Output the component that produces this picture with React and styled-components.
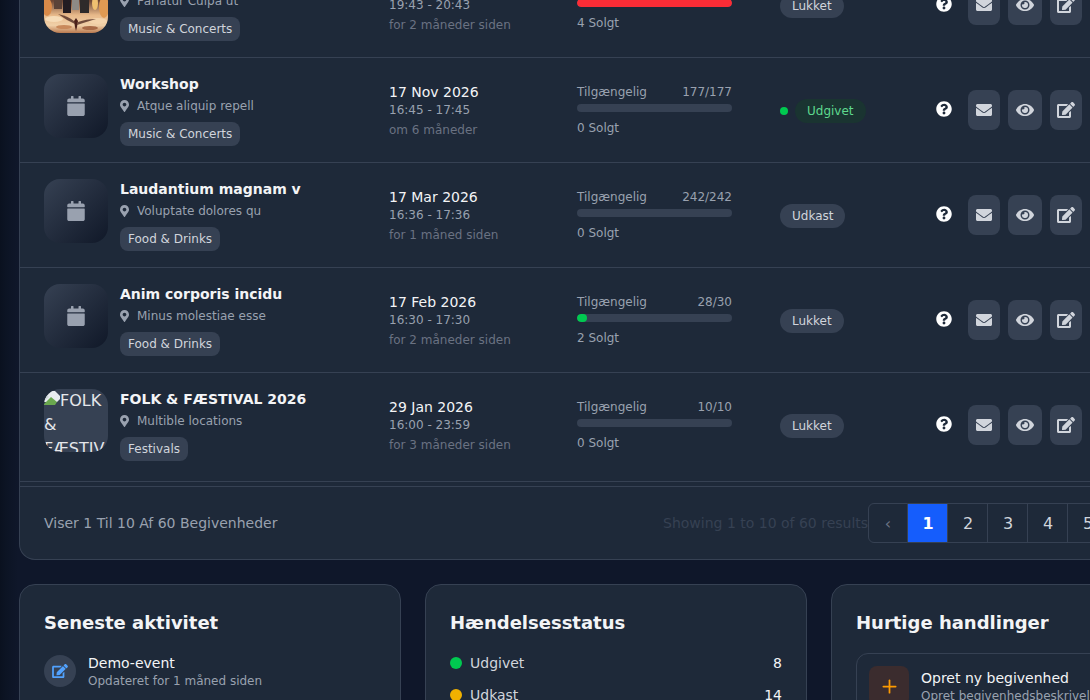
import React from "react";
import styled, { createGlobalStyle } from "styled-components";
import { FaCalendar, FaMapMarkerAlt, FaQuestionCircle, FaEnvelope, FaEye, FaEdit } from "react-icons/fa";
import { FiPlus } from "react-icons/fi";

const Global = createGlobalStyle`
  html, body { margin: 0; padding: 0; height: 700px; overflow: hidden; background: #0f172a; }
  body { font-family: "DejaVu Sans", sans-serif; }
  * { box-sizing: border-box; }
`;

const Viewport = styled.div`
  width: 1090px;
  height: 700px;
  overflow: hidden;
  background: linear-gradient(90deg, #0a111f 0, #0c1424 6px, #0f172a 18px);
`;
const Content = styled.main`
  width: 1213px;
  margin-top: -47px;
  margin-left: 19px;
  display: flex;
  flex-direction: column;
  gap: 24px;
`;
const Card = styled.section`
  background: #1e2939;
  border: 1px solid #364153;
  border-radius: 16px;
`;
const TableCard = styled(Card)`
  border-top: 0;
  border-radius: 0 0 16px 16px;
`;
const Row = styled.div`
  display: grid;
  grid-template-columns: 345px 188px 203px 156px 1fr;
  align-items: center;
  height: ${(p) => (p.$last ? 109 : 105)}px;
  padding: 16px 0 ${(p) => (p.$last ? 20 : 16)}px 24px;
  border-bottom: 1px solid #364153;
`;
const EventCell = styled.div`
  display: flex;
  gap: 12px;
`;
const Thumb = styled.div`
  width: 64px;
  height: 64px;
  border-radius: 16px;
  overflow: hidden;
  flex: none;
`;
const PlaceholderThumb = styled(Thumb)`
  display: flex;
  align-items: center;
  justify-content: center;
  background: linear-gradient(135deg, #364153 0%, #101828 100%);
  color: #99a1af;
`;
const CalendarIcon = styled(FaCalendar)`
  width: 18px;
  height: 20px;
`;
const BrokenThumb = styled(Thumb)`
  background: #364153;
  color: #e5e7eb;
  font-size: 16px;
  line-height: 24px;
  height: 63px;
  svg { vertical-align: -1px; }
`;
const EventInfo = styled.div`
  display: flex;
  flex-direction: column;
  align-items: flex-start;
`;
const EventName = styled.div`
  color: #f3f4f6;
  font-size: 14px;
  font-weight: 700;
  line-height: 20px;
`;
const Location = styled.div`
  display: flex;
  align-items: center;
  gap: 8px;
  margin-top: 3px;
  color: #99a1af;
  font-size: 12px;
  line-height: 18px;
`;
const PinIcon = styled(FaMapMarkerAlt)`
  width: 9px;
  height: 12px;
`;
const Tag = styled.span`
  margin-top: 7px;
  height: 24px;
  padding: 0 8px;
  border-radius: 8px;
  background: #364153;
  color: #d1d5dc;
  font-size: 12px;
  line-height: 24px;
`;
const DateCell = styled.div`
  display: flex;
  flex-direction: column;
`;
const DateText = styled.div`
  color: #f3f4f6;
  font-size: 14px;
  line-height: 20px;
`;
const TimeText = styled.div`
  color: #99a1af;
  font-size: 12px;
  line-height: 16px;
`;
const RelText = styled.div`
  color: #6a7282;
  font-size: 12px;
  line-height: 16px;
  margin-top: 4px;
`;
const CapacityCell = styled.div`
  width: 155px;
`;
const CapHead = styled.div`
  display: flex;
  justify-content: space-between;
  color: #99a1af;
  font-size: 12px;
  line-height: 16px;
`;
const Track = styled.div`
  height: 8px;
  margin: 4px 0 8px;
  border-radius: 4px;
  background: #364153;
  overflow: hidden;
`;
const Fill = styled.div`
  height: 100%;
  border-radius: 4px;
  background: ${(p) => p.$color};
`;
const Sold = styled.div`
  color: #99a1af;
  font-size: 12px;
  line-height: 16px;
`;
const StatusCell = styled.div`
  display: flex;
  align-items: center;
  gap: 7px;
  margin-top: 2px;
`;
const LiveDot = styled.span`
  width: 8px;
  height: 8px;
  border-radius: 50%;
  background: #00c950;
`;
const Pill = styled.span`
  height: 24px;
  padding: 0 12px;
  border-radius: 12px;
  background: ${(p) => (p.$live ? "#1a3431" : "#364153")};
  color: ${(p) => (p.$live ? "#5ed88e" : "#d1d5dc")};
  font-size: 12px;
  line-height: 24px;
`;
const Actions = styled.div`
  display: flex;
  align-items: center;
  gap: 8px;
`;
const Help = styled.span`
  display: flex;
  width: 16px;
  margin-right: 8px;
  color: #ffffff;
  font-size: 16px;
  transform: translateY(-1px);
`;
const IconBtn = styled.button`
  display: flex;
  align-items: center;
  justify-content: center;
  width: ${(p) => p.$w || 32}px;
  height: 40px;
  padding: 0;
  border: 0;
  border-radius: 8px;
  background: #364153;
  color: #d1d5dc;
  font-size: 16px;
`;
const EyeIcon = styled(FaEye)`
  width: 18px;
  height: 16px;
`;
const EditIcon = styled(FaEdit)`
  width: ${(p) => p.$w || 18}px;
  height: ${(p) => p.$h || 16}px;
`;
const Footer = styled.div`
  display: flex;
  align-items: center;
  justify-content: space-between;
  height: 73px;
  margin-top: 4px;
  padding: 0 0 0 24px;
  border-top: 1px solid #364153;
`;
const FootText = styled.div`
  color: #99a1af;
  font-size: 14px;
`;
const PagerWrap = styled.div`
  display: flex;
  align-items: center;
  margin-left: auto;
  width: 568px;
`;
const PagerNote = styled.div`
  width: 205px;
  flex: none;
  color: #364153;
  font-size: 14px;
  white-space: nowrap;
`;
const Page = styled.span`
  display: flex;
  align-items: center;
  justify-content: center;
  width: 40px;
  height: 40px;
  flex: none;
  padding-left: ${(p) => (p.$first ? 0 : 1)}px;
  border: 1px solid #364153;
  border-left-width: ${(p) => (p.$first ? 1 : 0)}px;
  border-radius: ${(p) => (p.$first ? "6px 0 0 6px" : 0)};
  background: ${(p) => (p.$active ? "#155dfc" : "transparent")};
  color: ${(p) => (p.$active ? "#ffffff" : p.$first ? "#6a7282" : "#d1d5dc")};
  font-size: 16px;
  font-weight: ${(p) => (p.$active ? 700 : 400)};
`;
const Bottom = styled.div`
  display: grid;
  grid-template-columns: repeat(3, 382px);
  gap: 24px;
  height: 300px;
`;
const Panel = styled(Card)`
  padding: 24px;
`;
const PanelTitle = styled.h3`
  margin: 0 0 16px;
  color: #f3f4f6;
  font-size: 18px;
  font-weight: 700;
  line-height: 28px;
`;
const Activity = styled.div`
  display: flex;
  align-items: center;
  gap: 12px;
`;
const ActIcon = styled.span`
  display: flex;
  align-items: center;
  justify-content: center;
  width: 32px;
  height: 32px;
  border-radius: 50%;
  background: #364153;
  color: #51a2ff;
`;
const ActTitle = styled.div`
  color: #f3f4f6;
  font-size: 14px;
  line-height: 20px;
`;
const ActSub = styled.div`
  color: #99a1af;
  font-size: 12px;
  line-height: 16px;
`;
const StatRow = styled.div`
  display: flex;
  align-items: center;
  height: 20px;
  margin-bottom: 12px;
  color: #d1d5dc;
  font-size: 14px;
`;
const StatDot = styled.span`
  width: 12px;
  height: 12px;
  margin-right: 8px;
  border-radius: 50%;
  background: ${(p) => p.$color};
`;
const StatValue = styled.span`
  margin-left: auto;
  color: #f3f4f6;
`;
const Quick = styled.div`
  display: flex;
  align-items: center;
  gap: 12px;
  padding: 12px;
  border: 1px solid #364153;
  border-radius: 12px;
`;
const QuickIcon = styled.span`
  display: flex;
  align-items: center;
  justify-content: center;
  width: 40px;
  height: 40px;
  border-radius: 8px;
  background: #3b2c2e;
  color: #fe9a00;
  font-size: 21px;
`;

function Poster() {
  return (
    <svg width="64" height="64" viewBox="0 0 64 64">
      <defs>
        <linearGradient id="sky" x1="0" y1="0" x2="0" y2="1">
          <stop offset="0" stopColor="#2c2226" />
          <stop offset=".5" stopColor="#6e4634" />
          <stop offset=".72" stopColor="#e8b98a" />
          <stop offset=".88" stopColor="#f0d0a8" />
          <stop offset="1" stopColor="#b9794f" />
        </linearGradient>
        <filter id="soft"><feGaussianBlur stdDeviation=".7" /></filter>
      </defs>
      <rect width="64" height="64" fill="url(#sky)" />
      <g filter="url(#soft)">
        <ellipse cx="3" cy="38" rx="5" ry="9" fill="#d98a4a" />
        <ellipse cx="60" cy="38" rx="5" ry="11" fill="#e09a52" />
        <rect x="10" y="28" width="8" height="12" fill="#5a4238" />
        <rect x="19" y="28" width="8" height="16" fill="#221e22" />
        <rect x="28" y="28" width="7" height="13" fill="#8d8a86" />
        <rect x="36" y="28" width="9" height="16" fill="#2f2a2a" />
        <ellipse cx="51" cy="34" rx="3" ry="7" fill="#f0c070" />
        <ellipse cx="10" cy="50" rx="9" ry="3" fill="#f6dcb8" />
        <ellipse cx="54" cy="52" rx="9" ry="3" fill="#f4d4ac" />
        <ellipse cx="20" cy="58" rx="8" ry="2" fill="#c98a5c" />
        <ellipse cx="46" cy="59" rx="8" ry="2" fill="#a86a46" />
      </g>
      <g fill="#5a362b" opacity=".85">
        <path d="M14 45 Q24 47 30 52 L31 55 Q22 51 14 45 Z" />
        <path d="M52 50 Q42 50 34 53 L33 56 Q42 53 52 50 Z" />
      </g>
      <path d="M30 52 L32 49 L34 52 L33 58 L32 62 L31 58 Z" fill="#4a2019" />
    </svg>
  );
}

function BrokenIcon() {
  return (
    <svg width="16" height="16" viewBox="0 0 16 16">
      <path d="M0 3 A3 3 0 0 1 3 0 H11 L16 5 V8 L13 11 H0 Z" fill="#e8ecf0" />
      <path d="M0 13 L7 6 L13 11 L11 14 H0 Z" fill="#6aa84f" />
      <path d="M0 10 L5 6 L3 4 L0 6 Z" fill="#cfd8dc" />
    </svg>
  );
}

const rows = [
  { name: "Pariatur Culpa", loc: "Pariatur Culpa ut", tag: "Music & Concerts", date: "17 Apr 2026", time: "19:43 - 20:43", rel: "for 2 måneder siden", cap: "0/4", pct: 100, color: "#fb2c36", sold: 4, status: "Lukket", thumb: "poster" },
  { name: "Workshop", loc: "Atque aliquip repell", tag: "Music & Concerts", date: "17 Nov 2026", time: "16:45 - 17:45", rel: "om 6 måneder", cap: "177/177", pct: 0, sold: 0, status: "Udgivet", live: true },
  { name: "Laudantium magnam v", loc: "Voluptate dolores qu", tag: "Food & Drinks", date: "17 Mar 2026", time: "16:36 - 17:36", rel: "for 1 måned siden", cap: "242/242", pct: 0, sold: 0, status: "Udkast" },
  { name: "Anim corporis incidu", loc: "Minus molestiae esse", tag: "Food & Drinks", date: "17 Feb 2026", time: "16:30 - 17:30", rel: "for 2 måneder siden", cap: "28/30", pct: 6.67, color: "#00c950", sold: 2, status: "Lukket" },
  { name: "FOLK & FÆSTIVAL 2026", loc: "Multible locations", tag: "Festivals", date: "29 Jan 2026", time: "16:00 - 23:59", rel: "for 3 måneder siden", cap: "10/10", pct: 0, sold: 0, status: "Lukket", thumb: "broken", last: true },
];

function Thumbnail({ row }) {
  if (row.thumb === "poster") return <Thumb><Poster /></Thumb>;
  if (row.thumb === "broken") return <BrokenThumb><BrokenIcon />{row.name}</BrokenThumb>;
  return <PlaceholderThumb><CalendarIcon /></PlaceholderThumb>;
}

export default function App() {
  return (
    <Viewport>
      <Global />
      <Content>
        <TableCard>
          {rows.map((r) => (
            <Row key={r.name} $last={r.last}>
              <EventCell>
                <Thumbnail row={r} />
                <EventInfo>
                  <EventName>{r.name}</EventName>
                  <Location><PinIcon />{r.loc}</Location>
                  <Tag>{r.tag}</Tag>
                </EventInfo>
              </EventCell>
              <DateCell>
                <DateText>{r.date}</DateText>
                <TimeText>{r.time}</TimeText>
                <RelText>{r.rel}</RelText>
              </DateCell>
              <CapacityCell>
                <CapHead><span>Tilgængelig</span><span>{r.cap}</span></CapHead>
                <Track>{r.pct > 0 && <Fill $color={r.color} style={{ width: `${r.pct}%` }} />}</Track>
                <Sold>{r.sold} Solgt</Sold>
              </CapacityCell>
              <StatusCell>
                {r.live && <LiveDot />}
                <Pill $live={r.live}>{r.status}</Pill>
              </StatusCell>
              <Actions>
                <Help><FaQuestionCircle /></Help>
                <IconBtn><FaEnvelope /></IconBtn>
                <IconBtn $w={34}><EyeIcon /></IconBtn>
                <IconBtn><EditIcon /></IconBtn>
              </Actions>
            </Row>
          ))}
          <Footer>
            <FootText>Viser 1 Til 10 Af 60 Begivenheder</FootText>
            <PagerWrap>
              <PagerNote>Showing 1 to 10 of 60 results</PagerNote>
              <Page $first>‹</Page>
              <Page $active>1</Page>
              <Page>2</Page>
              <Page>3</Page>
              <Page>4</Page>
              <Page>5</Page>
              <Page>6</Page>
              <Page>›</Page>
            </PagerWrap>
          </Footer>
        </TableCard>
        <Bottom>
          <Panel>
            <PanelTitle>Seneste aktivitet</PanelTitle>
            <Activity>
              <ActIcon><EditIcon $w={16} $h={14} /></ActIcon>
              <div>
                <ActTitle>Demo-event</ActTitle>
                <ActSub>Opdateret for 1 måned siden</ActSub>
              </div>
            </Activity>
          </Panel>
          <Panel>
            <PanelTitle>Hændelsesstatus</PanelTitle>
            <StatRow><StatDot $color="#00c950" />Udgivet<StatValue>8</StatValue></StatRow>
            <StatRow><StatDot $color="#f0b100" />Udkast<StatValue>14</StatValue></StatRow>
          </Panel>
          <Panel>
            <PanelTitle>Hurtige handlinger</PanelTitle>
            <Quick>
              <QuickIcon><FiPlus /></QuickIcon>
              <div>
                <ActTitle>Opret ny begivenhed</ActTitle>
                <ActSub>Opret begivenhedsbeskrivelse</ActSub>
              </div>
            </Quick>
          </Panel>
        </Bottom>
      </Content>
    </Viewport>
  );
}
